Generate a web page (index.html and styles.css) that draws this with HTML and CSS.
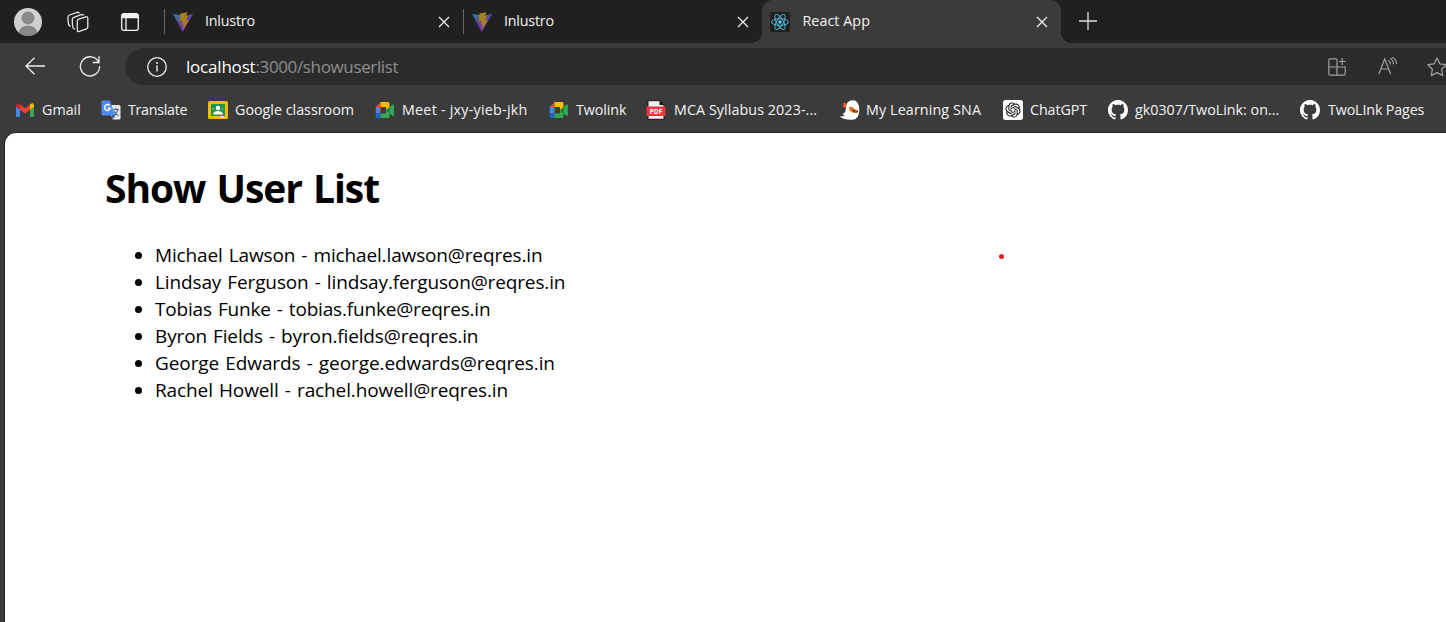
FILE: index.html
```html
<!DOCTYPE html>
<html lang="en">
<head>
<meta charset="utf-8">
<title>React App</title>
<link rel="stylesheet" href="styles.css">
</head>
<body>
<svg class="defs" aria-hidden="true">
  <defs>
    <linearGradient id="vg" x1="0" y1="0" x2="0.7" y2="1"><stop offset="0" stop-color="#2f8298"/><stop offset=".45" stop-color="#5c4a9c"/><stop offset="1" stop-color="#8a2fb0"/></linearGradient>
    <symbol id="vite" viewBox="0 0 20 20"><path d="M0 2 9.8 20 20 2l-9 1.6z" fill="url(#vg)"/><path d="m14.300.3-6.800 1.300-.8 7.800 3.200-.6-.9 4 1.700-.4-.6 5.200 5.900-9.700-3 .5 2-4.600-1.800.3z" fill="#a9811b"/></symbol>
    <symbol id="close" viewBox="0 0 12 12"><path d="m1 1 10 10M11 1 1 11" fill="none" stroke="#eee" stroke-width="1.3"/></symbol>
    <symbol id="github" viewBox="0 0 16 16"><path fill="#fff" d="M8 0C3.58 0 0 3.58 0 8c0 3.54 2.29 6.53 5.47 7.59.4.07.55-.17.55-.38 0-.19-.01-.82-.01-1.49-2.01.37-2.53-.49-2.69-.94-.09-.23-.48-.94-.82-1.13-.28-.15-.68-.52-.01-.53.63-.01 1.08.58 1.23.82.72 1.21 1.87.87 2.33.66.07-.52.28-.87.51-1.07-1.78-.2-3.64-.89-3.64-3.95 0-.87.31-1.59.82-2.15-.08-.2-.36-1.02.08-2.12 0 0 .67-.21 2.2.82.64-.18 1.32-.27 2-.27s1.36.09 2 .27c1.53-1.04 2.2-.82 2.2-.82.44 1.1.16 1.92.08 2.12.51.56.82 1.27.82 2.15 0 3.07-1.87 3.75-3.65 3.95.29.25.54.73.54 1.48 0 1.07-.01 1.93-.01 2.2 0 .21.15.46.55.38A8.01 8.01 0 0 0 16 8c0-4.42-3.58-8-8-8z"/></symbol>
    <symbol id="meet" viewBox="0 0 20 20"><path d="M.800 7 5.500 2v5z" fill="#ea4335"/><path d="M5.500 2H13q1.500 0 1.500 1.500V9L11 11V7H5.500z" fill="#fbbc04"/><path d="M.800 7h4.700v6.500H.800z" fill="#4285f4"/><path d="M.800 13.500h4.700V18H2.300q-1.500 0-1.500-1.500z" fill="#1967d2"/><path d="M5.500 13.500H11V10l6.700-5.500q1.200-.7 1.200.8v9.600q0 1.500-1.200.8l-3.200-2.300v3.100Q14.500 18 13 18H5.500z" fill="#34a853"/><path d="m11 10.200 3.500-3V13.400z" fill="#188038"/></symbol>
  </defs>
</svg>

<header class="tabstrip">
  <svg class="avatar" viewBox="0 0 28 28"><circle cx="14" cy="14" r="14" fill="#d2d0ce"/><circle cx="14" cy="10" r="6" fill="#8c8a88" stroke="#6f6d6b" stroke-width=".6"/><path d="M5 24.300q2-6.300 9-6.300t9 6.300A14 14 0 0 1 5 24.300z" fill="#8c8a88" stroke="#6f6d6b" stroke-width=".6"/></svg>
  <svg class="workspaces" viewBox="0 0 22 22"><g fill="#202020" stroke="#e6e6e6" stroke-width="1.300" stroke-linejoin="round"><path d="M3.500 15.500 1.800 14Q.8 11 1 6q.1-1.500 1.500-2L10 1.300q1.300-.3 2.500.9"/><path d="M8 18.300 6.500 17.500Q5.300 16.500 5.300 8.500q0-1.600 1.500-2.200l7.500-2.700q1.800-.5 2.500 1"/><path d="m11.600 8.200 7.300-2.400q1.900-.5 1.900 1.400v8.600q0 1.400-1.300 2l-7.200 2.600q-2 .6-2-1.400v-8.700q0-1.600 1.300-2.100z"/></g></svg>
  <svg class="vtabs" viewBox="0 0 18 18"><path d="M3 .7h12Q17.300.7 17.300 3v12q0 2.300-2.300 2.300H3Q.7 17.300.7 15V3Q.7.7 3 .7zM5 5v12" fill="none" stroke="#f2f2f2" stroke-width="1.300"/><path d="M.7 5.300V3Q.7.7 3 .7h12Q17.300.7 17.300 3v2.300z" fill="#f2f2f2"/></svg>
  <div class="tab tab-first"><svg class="fav"><use href="#vite"/></svg><span class="tab-title">Inlustro</span><svg class="close"><use href="#close"/></svg></div>
  <div class="tab"><svg class="fav"><use href="#vite"/></svg><span class="tab-title">Inlustro</span><svg class="close"><use href="#close"/></svg></div>
  <div class="tab tab-active"><svg class="fav" viewBox="0 0 20 20"><rect width="20" height="20" rx="1.500" fill="#202020"/><g fill="none" stroke="#4fb6d2" stroke-width=".95"><ellipse cx="10" cy="10" rx="8.600" ry="3.300"/><ellipse cx="10" cy="10" rx="8.600" ry="3.300" transform="rotate(60 10 10)"/><ellipse cx="10" cy="10" rx="8.600" ry="3.300" transform="rotate(120 10 10)"/></g><circle cx="10" cy="10" r="1.700" fill="#61dafb"/></svg><span class="tab-title react">React App</span><svg class="close"><use href="#close"/></svg></div>
  <svg class="newtab" viewBox="0 0 18 18"><path d="M9 0v18M0 9h18" stroke="#dcdcdc" stroke-width="1.300"/></svg>
</header>

<nav class="toolbar">
  <svg class="back" viewBox="0 0 20 18"><path d="M20 9H1M9.500.7 1 9l8.500 8.300" fill="none" stroke="#eee" stroke-width="1.300"/></svg>
  <svg class="reload" viewBox="0 0 22 22"><path d="M19.800 7.500A9.600 9.600 0 1 0 20.600 11M20 1.200v6.300h-6.300" fill="none" stroke="#eee" stroke-width="1.300"/></svg>
  <div class="address">
    <svg class="info" viewBox="0 0 20 20"><circle cx="10" cy="10" r="9.300" fill="none" stroke="#eee" stroke-width="1.300"/><path d="M10 8.500v6" stroke="#eee" stroke-width="1.400"/><circle cx="10" cy="6" r="1" fill="#eee"/></svg>
    <span class="url"><b class="host">localhost</b>:3000/showuserlist</span>
    <svg class="apps" viewBox="0 0 18 18"><path d="M8.500.8H2Q.8.800.8 2v14Q.8 17.200 2 17.200h14q1.200 0 1.200-1.200V9H.8M9 .8v16.400M14.200 0v7M10.800 3.500h7" fill="none" stroke="#a0a0a0" stroke-width="1.200"/></svg>
    <svg class="read" viewBox="0 0 20 18"><path d="M.7 17.300 6.700 2l6 15.300M2.800 12h7.800M10.300 3.500q2 1.200 2.200 4M12 1.200q3.200 1.500 3.600 6.200M14 0q4 2 4.600 7" fill="none" stroke="#a0a0a0" stroke-width="1.200"/></svg>
    <svg class="star" viewBox="0 0 20 20"><path d="m10 1 2.800 5.800 6.400.9-4.600 4.500 1.100 6.400L10 15.600l-5.700 3 1.100-6.400L.8 7.700l6.400-.9z" fill="none" stroke="#a0a0a0" stroke-width="1.200" stroke-linejoin="round"/></svg>
  </div>
</nav>

<nav class="bookmarks">
  <div class="bm gmail"><svg viewBox="0 0 20 20"><path d="M1 5v11q0 1 1 1h3V8z" fill="#4285f4"/><path d="M15 8v9h3q1 0 1-1V5z" fill="#34a853"/><path d="M5 4.500v5.300l5 3.800 5-3.800V4.500l-5 3.800z" fill="#ea4335"/><path d="M1 5v1.800l4 3V4.500l-1-.8Q1.500 2.500 1 5z" fill="#c5221f"/><path d="M19 5v1.800l-4 3V4.500l1-.8Q18.500 2.500 19 5z" fill="#fbbc04"/></svg><span>Gmail</span></div>
  <div class="bm translate"><svg viewBox="0 0 20 20"><path d="M7 5h11q1.500 0 1.500 1.500v12q0 1-1.500 1h-6.500z" fill="#e4e6e8"/><path d="M11 15h3.500l-3 4.500z" fill="#1a3fb8"/><path d="M1.500.5H9L14 15.500H1.500Q.5 15.500.5 14.500v-13Q.5.500 1.500.5z" fill="#4b8bf5"/><path d="M8.700 5.400a3 3 0 1 0 .8 2.800H6.500" fill="none" stroke="#fff" stroke-width="1.400"/><path d="M12 9.500h6M15 8v1.500m2 0q-1 4-4.500 6M13 11q1.500 3 4.500 4.500" fill="none" stroke="#53656e" stroke-width="1.100"/></svg><span>Translate</span></div>
  <div class="bm classroom"><svg viewBox="0 0 20 20"><rect y="1" width="20" height="18" rx="1.500" fill="#f6bb05"/><rect x="3" y="4" width="14" height="12" fill="#239454"/><circle cx="10" cy="8" r="2.200" fill="#fff"/><path d="M5.300 13.500q1-2.500 4.700-2.500t4.700 2.500v1H5.300z" fill="#fff"/><path d="M12 16h4v1.500h-4z" fill="#dfeee2"/><circle cx="5.500" cy="9" r="1.100" fill="#65b884"/><circle cx="14.500" cy="9" r="1.100" fill="#65b884"/></svg><span>Google classroom</span></div>
  <div class="bm meet"><svg><use href="#meet"/></svg><span>Meet - jxy-yieb-jkh</span></div>
  <div class="bm twolink"><svg><use href="#meet"/></svg><span>Twolink</span></div>
  <div class="bm mca"><svg viewBox="0 0 20 20"><path d="M2 .7h11.500L18 5v14.300H2z" fill="#eee" stroke="#161616"/><path d="M13.500.7V5H18z" fill="#161616"/><rect x=".5" y="6.500" width="19" height="9.500" rx=".8" fill="#f0343b"/><text x="10" y="13.700" text-anchor="middle" class="pdf">PDF</text></svg><span>MCA Syllabus 2023-...</span></div>
  <div class="bm sna"><svg viewBox="0 0 20 20"><path d="M5.800 8Q6.500.2 12.500.2q6.800 0 6.800 9.800 0 9.800-7.300 9.800Q3 20-.3 16.200q3.800.7 5-.9-1.500-.3-2.200-1.600 3.500-.4 3.300-5.700z" fill="#fff"/><path d="M3.500 2.200q2 .8 3.500 2L5.800 7.500 2.300 6.500q1.700-1.200 1.200-4.300z" fill="#ef6b1c"/><path d="M9 7q3.300-1 5.500 2l3.800 1.700q-2 2.800-5.300 2Q9 11.500 9 7z" fill="#f26b18"/><path d="m12 9.500 3.700 1.300-1.700 1.400zM15 12.500l3.300-2-.5 2z" fill="#222"/></svg><span>My Learning SNA</span></div>
  <div class="bm gpt"><svg viewBox="0 0 20 20"><rect width="20" height="20" rx="2.500" fill="#fff"/><path transform="translate(2.400 2.400) scale(.633)" fill="#111" d="M22.2819 9.8211a5.9847 5.9847 0 0 0-.5157-4.9108 6.0462 6.0462 0 0 0-6.5098-2.9A6.0651 6.0651 0 0 0 4.9807 4.1818a5.9847 5.9847 0 0 0-3.9977 2.9 6.0462 6.0462 0 0 0 .7427 7.0966 5.98 5.98 0 0 0 .511 4.9107 6.051 6.051 0 0 0 6.5146 2.9001A5.9847 5.9847 0 0 0 13.2599 24a6.0557 6.0557 0 0 0 5.7718-4.2058 5.9894 5.9894 0 0 0 3.9977-2.9001 6.0557 6.0557 0 0 0-.7475-7.0729zm-9.022 12.6081a4.4755 4.4755 0 0 1-2.8764-1.0408l.1419-.0804 4.7783-2.7582a.7948.7948 0 0 0 .3927-.6813v-6.7369l2.02 1.1686a.071.071 0 0 1 .038.052v5.5826a4.504 4.504 0 0 1-4.4945 4.4944zm-9.6607-4.1254a4.4708 4.4708 0 0 1-.5346-3.0137l.142.0852 4.783 2.7582a.7712.7712 0 0 0 .7806 0l5.8428-3.3685v2.3324a.0804.0804 0 0 1-.0332.0615L9.74 19.9502a4.4992 4.4992 0 0 1-6.1408-1.6464zM2.3408 7.8956a4.485 4.485 0 0 1 2.3655-1.9728V11.6a.7664.7664 0 0 0 .3879.6765l5.8144 3.3543-2.0201 1.1685a.0757.0757 0 0 1-.071 0l-4.8303-2.7865A4.504 4.504 0 0 1 2.3408 7.872zm16.5963 3.8558L13.1038 8.364 15.1192 7.2a.0757.0757 0 0 1 .071 0l4.8303 2.7913a4.4944 4.4944 0 0 1-.6765 8.1042v-5.6772a.79.79 0 0 0-.407-.667zm2.0107-3.0231l-.142-.0852-4.7735-2.7818a.7759.7759 0 0 0-.7854 0L9.409 9.2297V6.8974a.0662.0662 0 0 1 .0284-.0615l4.8303-2.7866a4.4992 4.4992 0 0 1 6.6802 4.66zM8.3065 12.863l-2.02-1.1638a.0804.0804 0 0 1-.038-.0567V6.0742a4.4992 4.4992 0 0 1 7.3757-3.4537l-.142.0805L8.704 5.459a.7948.7948 0 0 0-.3927.6813zm1.0976-2.3654l2.602-1.4998 2.6069 1.4998v2.9994l-2.5974 1.4997-2.6067-1.4997Z"/></svg><span>ChatGPT</span></div>
  <div class="bm repo"><svg><use href="#github"/></svg><span>gk0307/TwoLink: on...</span></div>
  <div class="bm pages"><svg><use href="#github"/></svg><span>TwoLInk Pages</span></div>
</nav>

<main class="page">
  <div class="content">
    <h1>Show User List</h1>
    <ul>
      <li class="u1">Michael Lawson - michael.lawson@reqres.in</li>
      <li class="u2">Lindsay Ferguson - lindsay.ferguson@reqres.in</li>
      <li class="u3">Tobias Funke - tobias.funke@reqres.in</li>
      <li class="u4">Byron Fields - byron.fields@reqres.in</li>
      <li class="u5">George Edwards - george.edwards@reqres.in</li>
      <li class="u6">Rachel Howell - rachel.howell@reqres.in</li>
    </ul>
  </div>
  <span class="pointer"></span>
</main>
</body>
</html>
```
FILE: styles.css
```css
* { box-sizing: border-box; }
body {
  margin: 0;
  width: 1446px;
  height: 622px;
  overflow: hidden;
  display: flex;
  flex-direction: column;
  background: #3b3b3b;
  font-family: "Open Sans", "Noto Sans", sans-serif;
}
svg { flex: none; display: block; }
.defs { position: absolute; width: 0; height: 0; }

.tabstrip {
  height: 43px;
  flex: none;
  display: flex;
  align-items: center;
  background: #202020;
  color: #f4f4f4;
}
.avatar { width: 28px; height: 28px; margin-left: 14px; }
.workspaces { width: 22px; height: 22px; margin-left: 25px; }
.vtabs { width: 18px; height: 18px; margin-left: 32px; }
.tab {
  width: 299px;
  height: 43px;
  flex: none;
  display: flex;
  align-items: center;
  padding: 0 13px 0 9px;
}
.tab:not(.tab-active)::before {
  content: "";
  width: 1px;
  height: 25px;
  margin: 0 8px 0 -9px;
  background: #666;
}
.tab-first { margin-left: 25px; }
.fav { width: 20px; height: 20px; }
.tab-title { flex: 1; margin: -2px 0 0 12px; font-size: 14.300px; letter-spacing: -.2px; white-space: nowrap; }
.react { letter-spacing: .05px; }
.close { width: 12px; height: 12px; }
.tab-active {
  position: relative;
  background: #3b3b3b;
  border-radius: 10px 10px 0 0;
}
.tab-active .fav { margin-left: -1px; }
.tab-active .tab-title { margin-left: 12.500px; }
.tab-active::before, .tab-active::after {
  content: "";
  position: absolute;
  bottom: 0;
  width: 10px;
  height: 10px;
}
.tab-active::before { left: -10px; background: radial-gradient(circle at 0 0, #202020 9.500px, #3b3b3b 10px); }
.tab-active::after { right: -10px; background: radial-gradient(circle at 100% 0, #202020 9.500px, #3b3b3b 10px); }
.newtab { width: 18px; height: 18px; margin: -2px 0 0 18px; }

.toolbar { height: 43px; flex: none; display: flex; align-items: center; padding-top: 4px; }
.back { width: 20px; height: 18px; margin: -2px 0 0 25px; }
.reload { width: 22px; height: 22px; margin: -2px 0 0 34px; }
.address {
  height: 37px;
  flex: 1;
  margin: -1px 0 0 24px;
  display: flex;
  align-items: center;
  border-radius: 19px 0 0 19px;
  background: #2b2b2b;
  overflow: hidden;
}
.info { width: 20px; height: 20px; margin: 1px 0 0 22px; }
.url { flex: 1; margin: 1px 0 0 19px; font-size: 17px; letter-spacing: -.36px; color: #8f8f8f; white-space: nowrap; }
.host { font-weight: 400; color: #fff; letter-spacing: -.2px; }
.apps { width: 18px; height: 18px; margin: 1px 32px 0 0; }
.read { width: 20px; height: 18px; margin: -1px 29px 0 0; }
.star { width: 20px; height: 20px; margin: 1px -1px 0 0; }

.bookmarks {
  height: 47px;
  flex: none;
  display: flex;
  align-items: center;
  padding: 0 0 0 15px;
  color: #f4f4f4;
  overflow: hidden;
}
.bm { flex: none; display: flex; align-items: center; gap: 7px; font-size: 14.300px; white-space: nowrap; }
.bm svg { width: 20px; height: 20px; }
.bm span { margin-top: -1px; }
.pdf { font: 700 6.500px "Open Sans", sans-serif; fill: #fff; }
.gmail { width: 86px; }
.translate { width: 107px; letter-spacing: -.3px; }
.classroom { width: 167px; }
.meet { width: 174px; letter-spacing: .24px; }
.twolink { width: 97px; letter-spacing: -.1px; }
.mca { width: 194px; gap: 8px; letter-spacing: .08px; }
.mca .pdf { letter-spacing: 0; }
.sna { width: 163px; gap: 6px; letter-spacing: .12px; }
.gpt { width: 105px; letter-spacing: -.1px; }
.repo { width: 192px; }
.pages { gap: 8px; letter-spacing: -.15px; }

.page {
  position: relative;
  flex: 1;
  margin-left: 5px;
  background: #fff;
  border-top-left-radius: 11px;
  box-shadow: 0 0 0 1px #242424;
  color: #000;
}
.content { padding: 28px 0 0 100px; }
h1 { margin: 0; font-size: 39px; line-height: 54px; font-weight: 700; letter-spacing: -1.050px; word-spacing: 2px; white-space: nowrap; }
ul { margin: 27px 0 0; padding-left: 50px; font-size: 19px; word-spacing: 1.300px; }
li { height: 27px; line-height: 27px; white-space: nowrap; }
.u1 { letter-spacing: -.14px; }
.u2 { letter-spacing: -.13px; }
.u3 { letter-spacing: -.18px; }
.u4 { letter-spacing: -.14px; }
.u5 { letter-spacing: -.09px; }
.u6 { letter-spacing: -.11px; }
.pointer {
  position: absolute;
  left: 994px;
  top: 121px;
  width: 5px;
  height: 5px;
  border-radius: 50%;
  background: #ed1c24;
}
```
